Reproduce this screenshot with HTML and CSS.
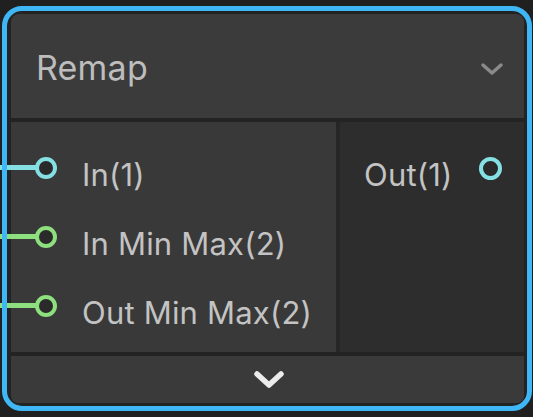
FILE: index.html
```html
<!DOCTYPE html>
<html lang="en">
<head>
  <meta charset="UTF-8">
  <meta name="viewport" content="width=device-width, initial-scale=1">
  <title>Remap</title>
  <link rel="stylesheet" href="styles.css">
</head>
<body>

<div class="node">
  <div class="node-header">
    <span class="node-title">Remap</span>
    <svg class="collapse" width="24" height="14" viewBox="0 0 24 14">
      <polyline points="3,3 12,11 21,3" fill="none" stroke="#8a8a8a" stroke-width="3.5" stroke-linecap="round" stroke-linejoin="round"/>
    </svg>
  </div>

  <div class="ports">
    <div class="inputs">
      <div class="port">
        <span class="wire cyan"></span>
        <span class="dot cyan"></span>
        <span class="label">In(1)</span>
      </div>
      <div class="port">
        <span class="wire green"></span>
        <span class="dot green"></span>
        <span class="label">In Min Max(2)</span>
      </div>
      <div class="port">
        <span class="wire green"></span>
        <span class="dot green"></span>
        <span class="label">Out Min Max(2)</span>
      </div>
    </div>
    <div class="outputs">
      <div class="port out">
        <span class="label">Out(1)</span>
        <span class="dot cyan"></span>
      </div>
    </div>
  </div>

  <div class="node-footer">
    <svg width="34" height="22" viewBox="0 0 34 22">
      <polyline points="5,5 17,16 29,5" fill="none" stroke="#ececec" stroke-width="5.5" stroke-linecap="round" stroke-linejoin="round"/>
    </svg>
  </div>
</div>

</body>
</html>
```

FILE: styles.css
```css
body {
  margin: 0;
  padding: 0;
  background-color: #202020;
  font-family: Inter, "Noto Sans", sans-serif;
}
.node {
  position: relative;
  margin: 6px 0 0 2px;
  width: 530px;
  height: 405px;
  box-sizing: border-box;
  padding: 8px 8px 8px 9px;
  background: #232323;
  border-radius: 20px;
  display: flex;
  flex-direction: column;
}
/* selection outline drawn over the wires */
.node::after {
  content: "";
  position: absolute;
  inset: 0;
  border: 5px solid #3fb6f5;
  border-radius: 20px;
  pointer-events: none;
  z-index: 2;
}
.node-header {
  height: 104px;
  background: #3b3b3b;
  border-radius: 8px 8px 0 0;
  display: flex;
  align-items: center;
  justify-content: space-between;
  padding: 0 20px 0 25px;
}
.node-title {
  font-size: 34px;
  letter-spacing: 0.2px;
  color: #bdbdbd;
  margin-top: 2px;
}
.collapse {
  margin-top: 6px;
}
.ports {
  display: flex;
  height: 230px;
  margin-top: 4px;
  background: #262626;
}
.inputs {
  width: 325px;
  background: #393939;
  padding-top: 18px;
  box-sizing: border-box;
}
.outputs {
  flex: 1;
  margin-left: 4px;
  background: #2d2d2d;
  padding-top: 18px;
}
.port {
  position: relative;
  height: 69px;
  display: flex;
  align-items: center;
  padding-left: 24px;
}
.port.out {
  gap: 26px;
}
.label {
  font-size: 31px;
  letter-spacing: 0.2px;
  color: #c3c3c3;
  white-space: nowrap;
}
.dot {
  width: 22px;
  height: 22px;
  box-sizing: border-box;
  border-radius: 50%;
  border: 4px solid;
  background: #2a2a2a;
  margin-right: 25px;
  margin-bottom: 13px;
  flex-shrink: 0;
}
.port.out .dot {
  width: 23px;
  height: 23px;
  margin-right: 0;
}
.wire {
  position: absolute;
  left: -11px;
  top: 25px;
  width: 36px;
  height: 5px;
}
.cyan { border-color: #84e0e3; }
.green { border-color: #8ee07e; }
.wire.cyan { background: #84e0e3; }
.wire.green { background: #8ee07e; }
.node-footer {
  margin-top: 4px;
  flex: 1;
  background: #3a3a3a;
  border-radius: 0 0 7px 7px;
  display: flex;
  align-items: center;
  justify-content: center;
  padding-left: 2px;
}
```
